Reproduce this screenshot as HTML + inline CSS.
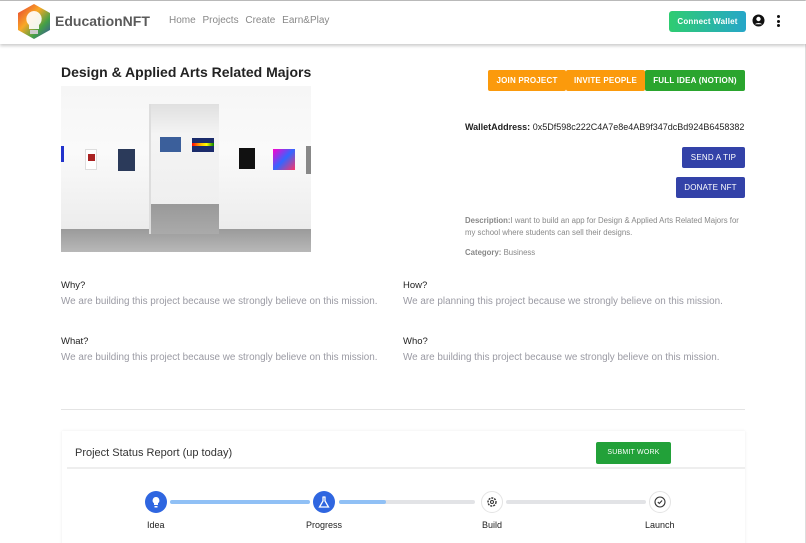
<!DOCTYPE html>
<html><head><style>
*{box-sizing:border-box;margin:0;padding:0}
html,body{width:806px;height:543px;overflow:hidden}
body{background:#fff;font-family:"Liberation Sans",sans-serif;position:relative;border-top:1px solid #bbb;border-right:1px solid #ddd}
.nav{position:absolute;left:0;top:0;width:806px;height:43px;background:#fff;box-shadow:0 2px 3px rgba(0,0,0,.2)}
.abs{position:absolute}
.btn{position:absolute;color:#fff;font-weight:bold;font-size:8px;text-align:center;border-radius:2px;letter-spacing:.2px}
.lbl{font-size:9.5px;color:#222}
.txt{font-size:9.9px;color:#9a9aa3}
</style></head><body>
<div class="nav">
 <svg class="abs" style="left:16px;top:2px" width="36" height="37" viewBox="0 0 36 37">
  <defs><linearGradient id="g" x1="0" y1="0" x2="1" y2="1"><stop offset="0" stop-color="#e53935"/><stop offset=".4" stop-color="#f9a825"/><stop offset=".7" stop-color="#43a047"/><stop offset="1" stop-color="#3949ab"/></linearGradient></defs>
  <polygon points="18,1 34,10 34,27 18,36 2,27 2,10" fill="url(#g)"/>
  <path d="M18 8a8 8 0 0 0-5 14v4h10v-4a8 8 0 0 0-5-14z" fill="#fff" opacity=".9"/>
  <rect x="14" y="27" width="8" height="4" fill="#ccc"/>
 </svg>
 <div class="abs" style="left:55px;top:12px;font-size:14px;font-weight:bold;color:#5a5a5a">EducationNFT</div>
 <div class="abs" style="left:169px;top:14px;font-size:10px;color:#888;word-spacing:4px">Home Projects Create Earn&amp;Play</div>
 <div class="btn" style="left:669px;top:10px;width:77px;height:21px;line-height:21px;background:linear-gradient(90deg,#2ecc71,#26a6c9);font-size:8px;border-radius:3px">Connect Wallet</div>
 <svg class="abs" style="left:752px;top:13px" width="13" height="13" viewBox="0 0 13 13"><circle cx="6.5" cy="6.5" r="6" fill="#111"/><circle cx="6.5" cy="5" r="2.2" fill="#fff"/><path d="M2.8 10.3a4.5 3 0 0 1 7.4 0" fill="#fff"/></svg>
 <div class="abs" style="left:777px;top:14px;width:3px"><div style="width:3px;height:3px;background:#111;border-radius:50%;margin-bottom:1.5px"></div><div style="width:3px;height:3px;background:#111;border-radius:50%;margin-bottom:1.5px"></div><div style="width:3px;height:3px;background:#111;border-radius:50%"></div></div>
</div>

<div class="abs" style="left:61px;top:63px;font-size:14px;font-weight:bold;color:#222">Design &amp; Applied Arts Related Majors</div>

<div class="abs" style="left:61px;top:85px;width:250px;height:166px;background:linear-gradient(180deg,#f6f6f6,#fafafa 40%,#ececec 86%,#9a9a9a 86%,#b8b8b8);overflow:hidden">
 <div class="abs" style="left:90px;top:18px;width:68px;height:100px;background:linear-gradient(180deg,#e0e0e0,#f4f4f4 30%,#efefef)"></div>
 <div class="abs" style="left:90px;top:118px;width:68px;height:30px;background:linear-gradient(180deg,#999,#aaa)"></div>
 <div class="abs" style="left:88px;top:18px;width:2px;height:130px;background:#ddd"></div>
 <div class="abs" style="left:0;top:60px;width:3px;height:16px;background:#2233cc"></div>
 <div class="abs" style="left:24px;top:63px;width:12px;height:21px;background:#fff;border:1px solid #ddd"><div style="margin:4px 2px;width:7px;height:7px;background:#a22"></div></div>
 <div class="abs" style="left:57px;top:63px;width:17px;height:22px;background:#2b3a5a"></div>
 <div class="abs" style="left:99px;top:51px;width:21px;height:15px;background:#3b5f9b"></div>
 <div class="abs" style="left:131px;top:52px;width:22px;height:14px;background:#1a2b6b"><div style="margin-top:5px;height:3px;background:linear-gradient(90deg,red,orange,yellow,green)"></div></div>
 <div class="abs" style="left:178px;top:62px;width:16px;height:21px;background:#111"></div>
 <div class="abs" style="left:212px;top:63px;width:22px;height:21px;background:linear-gradient(135deg,#f0c,#36f,#f36)"></div>
 <div class="abs" style="left:245px;top:60px;width:6px;height:28px;background:#888"></div>
</div>

<div class="btn" style="left:488px;top:69px;width:78px;height:21px;line-height:21px;background:#fb9a0c">JOIN PROJECT</div>
<div class="btn" style="left:566px;top:69px;width:79px;height:21px;line-height:21px;background:#fb9a0c">INVITE PEOPLE</div>
<div class="btn" style="left:645px;top:69px;width:100px;height:21px;line-height:21px;background:#2aa52e">FULL IDEA (NOTION)</div>

<div class="abs" style="left:465px;top:121px;font-size:9px;color:#222"><b>WalletAddress:</b> 0x5Df598c222C4A7e8e4AB9f347dcBd924B6458382</div>
<div class="btn" style="left:682px;top:146px;width:63px;height:21px;line-height:21px;background:#3342a8;font-weight:normal">SEND A TIP</div>
<div class="btn" style="left:676px;top:176px;width:69px;height:21px;line-height:21px;background:#3342a8;font-weight:normal">DONATE NFT</div>
<div class="abs" style="left:465px;top:214px;width:274px;font-size:7.8px;line-height:11.5px;color:#888"><b>Description:</b>I want to build an app for Design &amp; Applied Arts Related Majors for my school where students can sell their designs.</div>
<div class="abs" style="left:465px;top:247px;font-size:7.8px;color:#888"><b>Category:</b> Business</div>

<div class="abs lbl" style="left:61px;top:279px">Why?</div>
<div class="abs txt" style="left:61px;top:295px">We are building this project because we strongly believe on this mission.</div>
<div class="abs lbl" style="left:403px;top:279px">How?</div>
<div class="abs txt" style="left:403px;top:295px">We are planning this project because we strongly believe on this mission.</div>
<div class="abs lbl" style="left:61px;top:335px">What?</div>
<div class="abs txt" style="left:61px;top:351px">We are building this project because we strongly believe on this mission.</div>
<div class="abs lbl" style="left:403px;top:335px">Who?</div>
<div class="abs txt" style="left:403px;top:351px">We are building this project because we strongly believe on this mission.</div>

<div class="abs" style="left:61px;top:408px;width:684px;height:1px;background:#e4e4e4"></div>
<div class="abs" style="left:62px;top:430px;width:683px;height:120px;background:#fff;box-shadow:0 0 3px rgba(0,0,0,.08)"></div>
<div class="abs" style="left:75px;top:446px;font-size:11px;color:#333">Project Status Report (up today)</div>
<div class="btn" style="left:596px;top:441px;width:75px;height:22px;line-height:22px;background:#22a139;font-weight:normal;font-size:7px">SUBMIT WORK</div>
<div class="abs" style="left:67px;top:466px;width:678px;height:2px;background:#eee"></div>

<div class="abs" style="left:170px;top:499px;width:140px;height:4px;background:#90c0f5;border-radius:2px"></div>
<div class="abs" style="left:339px;top:499px;width:136px;height:4px;background:#e2e3e6;border-radius:2px"><div style="width:47px;height:4px;background:#90c0f5;border-radius:2px"></div></div>
<div class="abs" style="left:506px;top:499px;width:140px;height:4px;background:#e2e3e6;border-radius:2px"></div>
<svg class="abs" style="left:145px;top:490px" width="22" height="22"><circle cx="11" cy="11" r="11" fill="#2f66e0"/><path d="M11 6a3.5 3.5 0 0 0-2 6.3V14h4v-1.7A3.5 3.5 0 0 0 11 6z" fill="#fff"/><rect x="9.5" y="15" width="3" height="1.5" fill="#fff"/></svg>
<svg class="abs" style="left:313px;top:490px" width="22" height="22"><circle cx="11" cy="11" r="11" fill="#2f66e0"/><path d="M9.5 6h3M10 6v4l-3.5 6h9L12 10V6" fill="none" stroke="#fff" stroke-width="1.3"/></svg>
<svg class="abs" style="left:481px;top:490px" width="22" height="22"><circle cx="11" cy="11" r="10.5" fill="#fff" stroke="#e4e4e4"/><circle cx="11" cy="11" r="4" fill="none" stroke="#333" stroke-width="1.4" stroke-dasharray="2 1"/><circle cx="11" cy="11" r="1.5" fill="none" stroke="#333"/></svg>
<svg class="abs" style="left:649px;top:490px" width="22" height="22"><circle cx="11" cy="11" r="10.5" fill="#fff" stroke="#e4e4e4"/><circle cx="11" cy="11" r="5" fill="none" stroke="#333" stroke-width="1.1"/><path d="M8.8 11l1.5 1.5 2.8-3" fill="none" stroke="#333" stroke-width="1.1"/></svg>
<div class="abs" style="left:147px;top:519px;font-size:9px;color:#222">Idea</div>
<div class="abs" style="left:306px;top:519px;font-size:9px;color:#222">Progress</div>
<div class="abs" style="left:482px;top:519px;font-size:9px;color:#222">Build</div>
<div class="abs" style="left:645px;top:519px;font-size:9px;color:#222">Launch</div>
</body></html>
